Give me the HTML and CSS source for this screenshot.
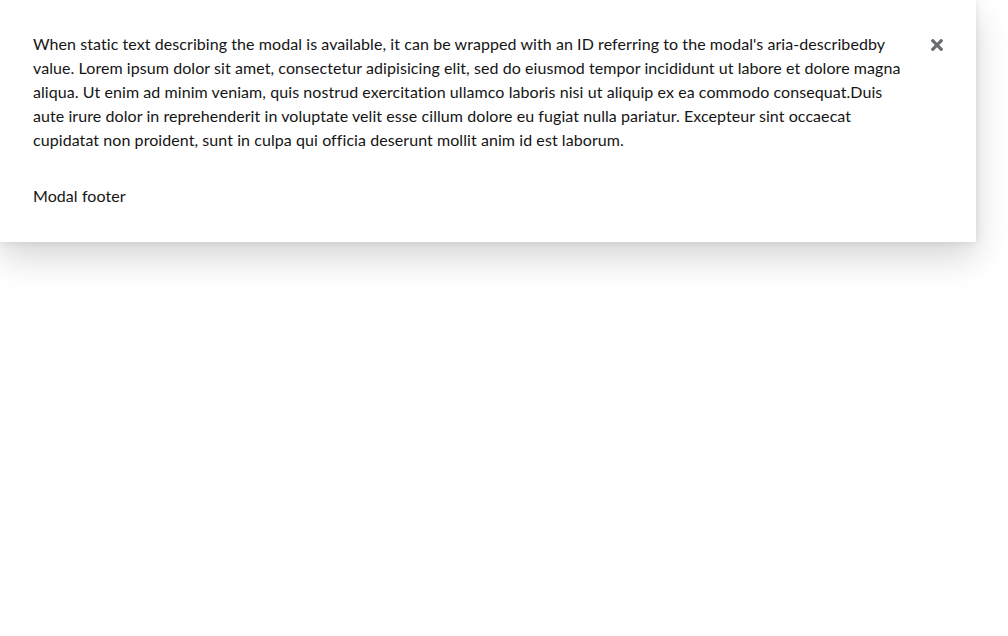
FILE: index.html
```html
<!DOCTYPE html>
<html>
<head>
<meta charset="utf-8">
<link rel="stylesheet" href="styles.css">
</head>
<body>
<div class="modal" role="dialog" aria-describedby="modal-desc">
  <div class="modal-row">
    <p class="modal-body" id="modal-desc">When static text describing the modal is available, it can be wrapped with an ID referring to the modal's aria-describedby value. Lorem ipsum dolor sit amet, consectetur adipisicing elit, sed do eiusmod tempor incididunt ut labore et dolore magna aliqua. Ut enim ad minim veniam, quis nostrud exercitation ullamco laboris nisi ut aliquip ex ea commodo consequat.Duis aute irure dolor in reprehenderit in voluptate velit esse cillum dolore eu fugiat nulla pariatur. Excepteur sint occaecat cupidatat non proident, sunt in culpa qui officia deserunt mollit anim id est laborum.</p>
    <button class="close" aria-label="Close">
      <svg class="close-icon" viewBox="0 85 352 342" width="12" height="12" aria-hidden="true"><path d="M242.72 256l100.07-100.07c12.28-12.28 12.28-32.19 0-44.480l-22.24-22.24c-12.28-12.28-32.19-12.28-44.48 0L176 189.28 75.93 89.21c-12.28-12.28-32.19-12.280-44.48 0L9.21 111.45c-12.28 12.28-12.28 32.19 0 44.48L109.28 256 9.21 356.07c-12.28 12.28-12.28 32.19 0 44.48l22.24 22.24c12.28 12.28 32.2 12.28 44.48 0L176 322.72l100.07 100.07c12.28 12.28 32.2 12.28 44.48 0l22.24-22.24c12.28-12.28 12.28-32.19 0-44.48L242.72 256z"/></svg>
    </button>
  </div>
  <div class="modal-footer">Modal footer</div>
</div>
</body>
</html>
```
FILE: styles.css
```css
html, body {
  margin: 0;
  padding: 0;
  background: #fff;
}
body {
  min-height: 100vh;
  font-family: Lato, "Liberation Sans", sans-serif;
  font-size: 16px;
  line-height: 24px;
  letter-spacing: 0.07px;
  color: #151515;
}
.modal {
  width: 976px;
  box-sizing: border-box;
  padding: 32px 27px 34px 33px;
  background: #fff;
  box-shadow: 0 16px 32px 0 rgba(3, 3, 3, 0.16), 0 0 8px 0 rgba(3, 3, 3, 0.1);
  display: flex;
  flex-direction: column;
  gap: 32px;
}
.modal-row {
  display: flex;
  align-items: flex-start;
  gap: 12px;
}
.modal-body {
  margin: 0;
  flex: 1;
}
.close {
  width: 24px;
  height: 24px;
  margin-top: 1px;
  padding: 0;
  border: 0;
  background: transparent;
  display: flex;
  align-items: center;
  justify-content: center;
  color: #6a6e73;
  cursor: pointer;
}
.close-icon {
  fill: currentColor;
  display: block;
}
.modal-footer {
  margin: 0;
}
```
